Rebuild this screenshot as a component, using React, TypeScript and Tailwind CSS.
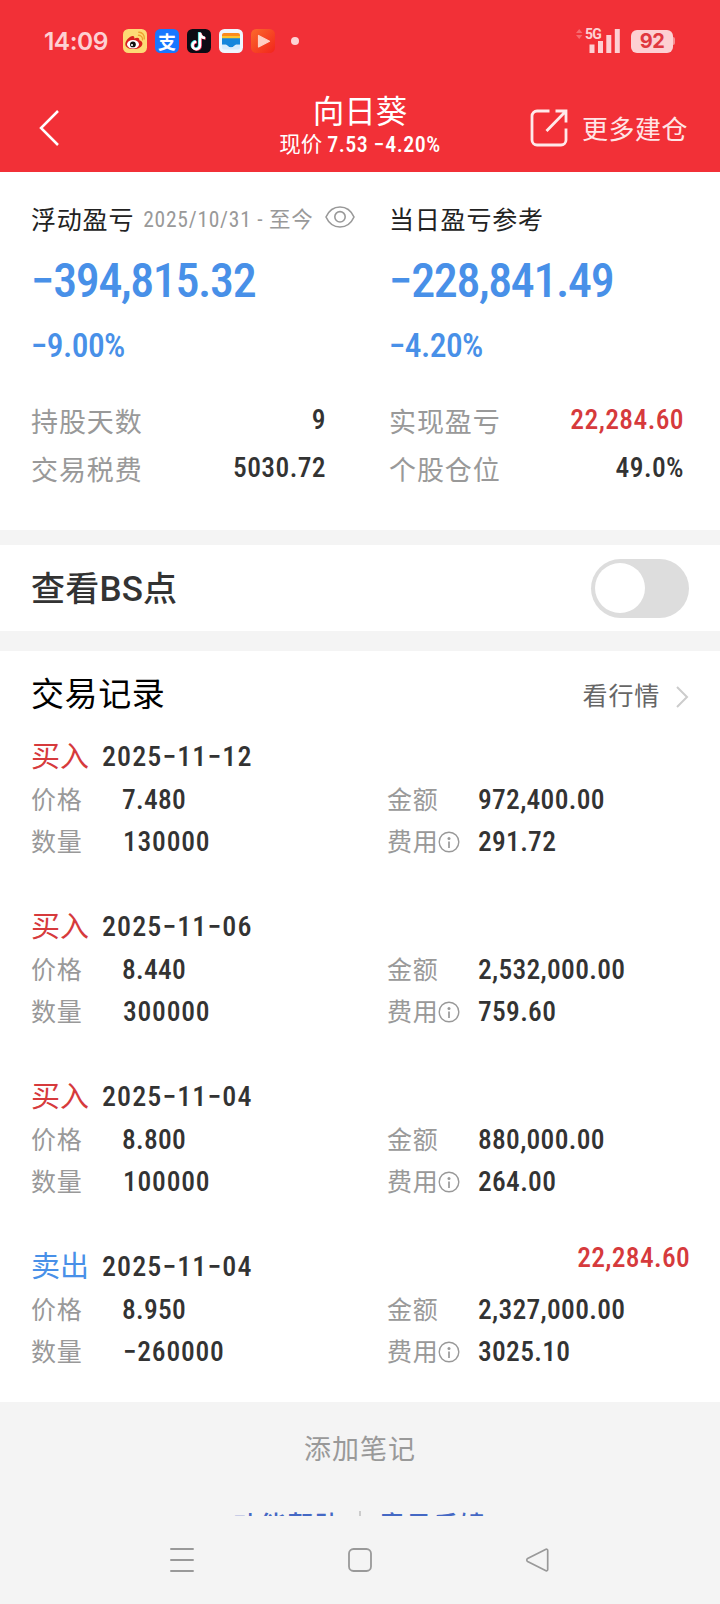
import React from 'react';

interface TradeRecord {
  side: 'buy' | 'sell';
  date: string;
  price: string;
  amount: string;
  quantity: string;
  fee: string;
  profit?: string;
}

const records: TradeRecord[] = [
  { side: 'buy', date: '2025−11−12', price: '7.480', amount: '972,400.00', quantity: '130000', fee: '291.72' },
  { side: 'buy', date: '2025−11−06', price: '8.440', amount: '2,532,000.00', quantity: '300000', fee: '759.60' },
  { side: 'buy', date: '2025−11−04', price: '8.800', amount: '880,000.00', quantity: '100000', fee: '264.00' },
  { side: 'sell', date: '2025−11−04', price: '8.950', amount: '2,327,000.00', quantity: '−260000', fee: '3025.10', profit: '22,284.60' },
];

const StatusBar: React.FC = () => (
  <div className="flex h-[82px] items-center pl-[44px] pr-[45px]">
    <span className="w-[79px] font-['Inter','Noto_Sans_CJK_SC',sans-serif] text-[24.5px] font-semibold tracking-[-0.5px] text-[#fdd0d3]">14:09</span>
    <div className="flex items-center gap-2">
      {/* Weibo */}
      <svg width="24" height="24" viewBox="0 0 24 24">
        <rect width="24" height="24" rx="5.5" fill="#fdda75" />
        <path d="M2.3 15.2c0-3.600 4.400-8.200 7.400-8.200 1.900 0 1.800 1.500 1.500 2.500 2.700-1.100 5.500-1.100 5.100 1.700 2.100.6 3.100 1.700 3.100 3.300 0 3.100-3.800 5.600-8.700 5.600s-8.400-1.900-8.400-4.900z" fill="#d9201f" />
        <ellipse cx="10" cy="15.200" rx="6" ry="4.300" fill="#fff" />
        <circle cx="9.900" cy="15.400" r="2.900" fill="#111" />
        <circle cx="9" cy="16" r="1.100" fill="#fff" />
        <path d="M15.500 6.200a4 4 0 0 1 4 4.700M15.800 3.300c3.400-.2 6 3 5.500 6.600" fill="none" stroke="#f0a030" strokeWidth="1.400" strokeLinecap="round" />
      </svg>
      {/* Alipay */}
      <span className="flex h-6 w-6 items-center justify-center rounded-[5.5px] bg-[#1777ff] font-['Noto_Sans_CJK_SC',sans-serif] text-[18px] leading-6 font-bold text-white">支</span>
      {/* Douyin */}
      <svg width="24" height="24" viewBox="0 0 24 24">
        <rect width="24" height="24" rx="5.500" fill="#0c0b14" />
        <g fill="none" strokeWidth="2.600">
          <path d="M12.200 3v13a3.700 3.700 0 1 1-3.700-3.700M12.200 3.500c.4 2.900 2.400 4.800 5.200 5" stroke="#25e0dd" />
          <path d="M13.600 4v13a3.700 3.700 0 1 1-3.700-3.700M13.600 4.500c.4 2.900 2.400 4.800 5.200 5" stroke="#f5345b" />
          <path d="M12.900 3.500v13a3.700 3.700 0 1 1-3.700-3.700M12.900 4c.4 2.900 2.400 4.800 5.200 5" stroke="#fff" />
        </g>
      </svg>
      {/* Wallet */}
      <svg width="24" height="24" viewBox="0 0 24 24">
        <rect width="24" height="24" rx="5.500" fill="#eef6ff" />
        <path d="M3 6a2 2 0 0 1 2-2h14a2 2 0 0 1 2 2v3H3z" fill="#fb8a1e" />
        <path d="M3 7h18v3H3z" fill="#fcc52f" />
        <path d="M3 9.200h18v6.600h-3.500c-1.900 0-2.300 2.600-5.500 2.600s-3.600-2.600-5.500-2.600H3z" fill="#1586dc" />
        <path d="M3 15.800h3.500c1.900 0 2.300 2.600 5.500 2.600s3.600-2.600 5.500-2.600H21v2.700a2 2 0 0 1-2 2H5a2 2 0 0 1-2-2z" fill="#d8ebfc" />
      </svg>
      {/* Video player */}
      <svg width="24" height="24" viewBox="0 0 24 24">
        <defs>
          <linearGradient id="player" x1="0" y1="0" x2="1" y2="1">
            <stop offset="0" stopColor="#fb6a2c" />
            <stop offset="1" stopColor="#f2241c" />
          </linearGradient>
        </defs>
        <rect width="24" height="24" rx="5.500" fill="url(#player)" />
        <path d="M7.500 6.500v11.500l11-5.700z" fill="#ffd0c4" stroke="#ffd0c4" strokeWidth="1.200" strokeLinejoin="round" />
      </svg>
    </div>
    <span className="ml-4 h-2 w-2 rounded-full bg-[#fdd3d5]" />

    <svg className="ml-auto mt-[-2px]" width="46" height="28" viewBox="0 0 46 28">
      <path d="M0 7l3.200-4 3.200 4zM0 9l3.200 4 3.200-4z" fill="#f66a6f" />
      <text x="9" y="13" fontFamily="Roboto, sans-serif" fontSize="14" fontWeight="700" letterSpacing="-0.900" fill="#fdd0d3">5G</text>
      <path d="M13.500 18.500h5V27h-5zM22 15h5v12h-5zM30.300 9h5v18h-5zM38.800 3h5v24h-5z" fill="#fdd0d3" />
    </svg>
    <span className="ml-[9px] flex h-[23px] w-[42px] items-center justify-center rounded-[6px] bg-[#fdd0d3] font-['Inter',sans-serif] text-[20px] leading-[23px] font-bold tracking-[-0.5px] text-[#e0383f]">92</span>
    <span className="h-2 w-[2px] rounded-r-full bg-[#f78f93]" />
  </div>
);

const Header: React.FC = () => (
  <div className="grid h-[90px] grid-cols-3 items-center text-white">
    <svg className="ml-[38px] mt-[2px]" width="22" height="38" viewBox="0 0 22 38">
      <path d="M20 2L3 19l17 17" fill="none" stroke="#fff" strokeWidth="2.500" />
    </svg>
    <div className="flex flex-col items-center">
      <div className="h-[36px] text-[31.5px] leading-[36px]">向日葵</div>
      <div className="flex h-7 items-center text-[21.5px] leading-7 whitespace-pre">
        现价 <span className="text-[22px] font-medium tracking-[0.5px]">7.53 −4.20%</span>
      </div>
    </div>
    <div className="mt-[2px] flex items-center justify-end pr-[32px]">
      <svg width="38" height="38" viewBox="0 0 38 38" fill="none" stroke="#ffe9ea" strokeWidth="2.800">
        <path d="M19.500 2H7a5 5 0 0 0-5 5v24a5 5 0 0 0 5 5h24a5 5 0 0 0 5-5V19.500" />
        <path d="M16.500 22L35.500 2.500M25.500 2H36v11.500" />
      </svg>
      <span className="ml-[14px] pt-[3px] text-[26px] leading-9 tracking-[0.5px] text-[#ffe5e6]">更多建仓</span>
    </div>
  </div>
);

const SummaryRow: React.FC<{ label: string; value: string; red?: boolean }> = ({ label, value, red }) => (
  <div className="flex h-12 items-center justify-between">
    <span className="pt-1 text-[27px] leading-[48px] tracking-[0.9px] text-[#999]">{label}</span>
    <span className={`mt-[-3px] text-[27.5px] leading-[44px] font-medium tracking-[0.4px] ${red ? 'text-[#d63a3c]' : 'text-[#333]'}`}>{value}</span>
  </div>
);

const Profit: React.FC<{ value: string; rate: string }> = ({ value, rate }) => (
  <>
    <div className="mt-[17px] h-[50px] text-[48px] leading-[50px] font-medium tracking-[-1.4px] text-[#4890e8]">{value}</div>
    <div className="mt-[19px] h-[42px] text-[33.5px] leading-[42px] font-medium tracking-[-0.6px] text-[#4890e8]">{rate}</div>
  </>
);

const Summary: React.FC = () => (
  <div className="grid h-[358px] grid-cols-[358px_1fr] bg-white pt-[27px]">
    <div className="pl-[31px]">
      <div className="flex h-10 items-center whitespace-nowrap">
        <span className="pt-[3px] text-[25px] tracking-[0.8px] text-[#222]">浮动盈亏</span>
        <span className="ml-[9px] pt-[3px] text-[21.5px] tracking-[0.75px] text-[#999]">2025/10/31 - 至今</span>
        <svg className="ml-[11px] mt-[-4px] shrink-0" width="30" height="22" viewBox="0 0 30 22" fill="none" stroke="#999" strokeWidth="1.600">
          <path d="M1 11C7-2.300 23-2.300 29 11 23 24.300 7 24.300 1 11z" />
          <circle cx="15" cy="10.800" r="5.200" />
        </svg>
      </div>
      <Profit value="−394,815.32" rate="−9.00%" />
      <div className="mt-[30px] w-[295px]">
        <SummaryRow label="持股天数" value="9" />
        <SummaryRow label="交易税费" value="5030.72" />
      </div>
    </div>
    <div className="pl-[31px]">
      <div className="flex h-10 items-center pt-[3px] text-[25px] tracking-[0.8px] text-[#222]">当日盈亏参考</div>
      <Profit value="−228,841.49" rate="−4.20%" />
      <div className="mt-[30px] w-[295px]">
        <SummaryRow label="实现盈亏" value="22,284.60" red />
        <SummaryRow label="个股仓位" value="49.0%" />
      </div>
    </div>
  </div>
);

const RecordItem: React.FC<{ record: TradeRecord }> = ({ record }) => (
  <div className="h-[170px]">
    <div className="flex h-[43px] items-center">
      <span className={`w-[71px] pt-[2px] text-[29px] leading-[43px] ${record.side === 'buy' ? 'text-[#d63a3c]' : 'text-[#4890e8]'}`}>
        {record.side === 'buy' ? '买入' : '卖出'}
      </span>
      <span className="text-[28px] leading-[43px] font-medium tracking-[1.1px] text-[#333]">{record.date}</span>
      {record.profit && (
        <span className="mt-[-17px] ml-auto mr-[-1px] text-[27.5px] leading-7 font-medium tracking-[0.3px] text-[#d63a3c]">{record.profit}</span>
      )}
    </div>
    <div className="grid grid-cols-[91px_265px_91px_1fr] pt-px text-[25px] leading-[42px] tracking-[0.8px] text-[#999]">
      <span className="relative top-px">价格</span>
      <span className="text-[27.5px] font-medium tracking-[0.3px] text-[#333]">{record.price}</span>
      <span className="relative top-px">金额</span>
      <span className="text-[27.5px] font-medium tracking-[0.3px] text-[#333]">{record.amount}</span>
      <span className="relative top-px">数量</span>
      <span className="pl-px text-[27.5px] font-medium tracking-[0.8px] text-[#333]">{record.quantity}</span>
      <span className="flex items-center">
        <span className="relative top-px">费用</span>
        <svg className="-ml-px shrink-0" width="22" height="22" viewBox="0 0 22 22">
          <circle cx="11" cy="11" r="9.800" fill="none" stroke="#999" strokeWidth="1.400" />
          <circle cx="11" cy="7.500" r="1.500" fill="#999" />
          <path d="M11 10.500V17" stroke="#999" strokeWidth="1.700" />
        </svg>
      </span>
      <span className="text-[27.5px] font-medium tracking-[0.3px] text-[#333]">{record.fee}</span>
    </div>
  </div>
);

const NavigationBar: React.FC = () => (
  <div className="flex h-[88px] items-center justify-between px-[169px] text-[#999]">
    <svg width="26" height="26" viewBox="0 0 26 26" stroke="currentColor" strokeWidth="1.900" strokeLinecap="round">
      <path d="M2 2h22M2 13h22M2 24h22" />
    </svg>
    <svg width="26" height="26" viewBox="0 0 26 26" fill="none" stroke="currentColor" strokeWidth="1.800">
      <rect x="2" y="2" width="22" height="22" rx="4.500" />
    </svg>
    <svg className="-translate-x-px" width="26" height="26" viewBox="0 0 26 26" fill="none" stroke="currentColor" strokeWidth="1.700" strokeLinejoin="round">
      <path d="M22 2.300L3.600 11.600a1.600 1.600 0 0 0 0 2.800L22 23.700a1.200 1.200 0 0 0 1.700-1.100V3.400A1.200 1.200 0 0 0 22 2.300z" />
    </svg>
  </div>
);

export default function App() {
  return (
    <div className="h-[1604px] w-[720px] overflow-hidden bg-[#f4f4f4] font-['Roboto_Condensed','Roboto','Noto_Sans_CJK_SC',sans-serif]">
      <div className="h-[172px] bg-[#f23037]">
        <StatusBar />
        <Header />
      </div>

      <Summary />

      <div className="mt-[15px] flex h-[86px] items-center justify-between bg-white pl-[31px] pr-[31px]">
        <span className="pt-[3px] text-[34px] leading-[86px] font-medium tracking-[0.2px] text-[#333]">
          查看<span className="font-['Roboto',sans-serif] text-[35px]">BS</span>点
        </span>
        <button className="flex h-[59px] w-[98px] items-center rounded-full bg-[#ddd] pl-1">
          <span className="h-[50px] w-[50px] rounded-full bg-white" />
        </button>
      </div>

      <div className="mt-5 h-[751px] bg-white pl-[31px] pr-[31px]">
        <div className="flex h-[84px] items-center justify-between">
          <span className="pt-[3px] text-[33px] leading-[84px] tracking-[0.6px] text-black">交易记录</span>
          <span className="mt-[8px] flex items-center text-[25px] tracking-[0.8px] text-[#666]">
            看行情
            <svg className="ml-[15px]" width="14" height="24" viewBox="0 0 14 24">
              <path d="M2 2l10 10L2 22" fill="none" stroke="#ccc" strokeWidth="2" />
            </svg>
          </span>
        </div>
        {records.map((record, i) => (
          <RecordItem key={i} record={record} />
        ))}
      </div>

      <div className="h-[114px] overflow-hidden">
        <div className="h-[92px] pt-[2px] text-center text-[27px] leading-[92px] tracking-[1px] text-[#999]">添加笔记</div>
        <div className="mt-[15px] flex justify-center text-[26px] leading-[34px] font-medium text-[#4468c4]">
          <span className="tracking-[0.8px]">功能帮助</span>
          <span className="mx-[18px] mt-[2px] h-6 w-[2px] bg-[#ccc]" />
          <span className="tracking-[0.8px]">意见反馈</span>
        </div>
      </div>

      <NavigationBar />
    </div>
  );
}
